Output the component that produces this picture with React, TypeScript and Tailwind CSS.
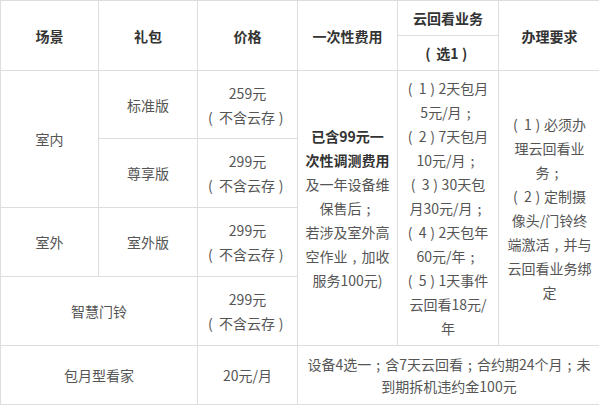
import type { ReactNode } from "react";

const cell = "border border-[#dddddd] text-center align-middle p-0 whitespace-nowrap";
const head = `${cell} font-bold text-[#333333]`;

// fullwidth punctuation drawn the way the reference font places it
const punct: Record<string, { ch: string; cls: string }> = {
  "（": { ch: "(", cls: "w-[11px] text-left" },
  "）": { ch: ")", cls: "w-[12px] text-center" },
  "；": { ch: ";", cls: "w-[1em] text-center" },
  "，": { ch: ",", cls: "w-[1em] text-center" },
};

function fmt(text: string): ReactNode[] {
  const out: ReactNode[] = [];
  let buf = "";
  [...text].forEach((c, i) => {
    const p = punct[c];
    if (p) {
      if (buf) out.push(buf);
      buf = "";
      out.push(
        <span key={i} className={`inline-block ${p.cls}`}>
          {p.ch}
        </span>,
      );
    } else {
      buf += c;
    }
  });
  if (buf) out.push(buf);
  return out;
}

const Lines = ({ lines, bold = 0 }: { lines: string[]; bold?: number }) => (
  <>
    {lines.map((l, i) => (
      <div key={i} className={i < bold ? "font-bold text-[#333333]" : ""}>
        {fmt(l)}
      </div>
    ))}
  </>
);

const Price = ({ value }: { value: string }) => (
  <Lines lines={[value, "（不含云存）"]} />
);

export default function App() {
  return (
    <div className="w-[599px] h-[406px] overflow-hidden bg-white">
      <table
        className="table-fixed border-collapse w-[600px] text-[14px] leading-[24px] text-[#555555]"
        style={{ fontFamily: '"Noto Sans CJK SC", "Microsoft YaHei", sans-serif' }}
      >
        <colgroup>
          <col className="w-[98px]" />
          <col className="w-[99px]" />
          <col className="w-[100px]" />
          <col className="w-[100px]" />
          <col className="w-[101px]" />
          <col className="w-[102px]" />
        </colgroup>
        <tbody>
          <tr className="h-[35px]">
            <td className={head} rowSpan={2}>场景</td>
            <td className={head} rowSpan={2}>礼包</td>
            <td className={head} rowSpan={2}>价格</td>
            <td className={head} rowSpan={2}>一次性费用</td>
            <td className={head}>云回看业务</td>
            <td className={head} rowSpan={2}>办理要求</td>
          </tr>
          <tr className="h-[35px]">
            <td className={head}>{fmt("（选1）")}</td>
          </tr>
          <tr className="h-[68px]">
            <td className={cell} rowSpan={2}>室内</td>
            <td className={cell}>标准版</td>
            <td className={cell}>
              <Price value="259元" />
            </td>
            <td className={cell} rowSpan={4}>
              <Lines
                bold={2}
                lines={[
                  "已含99元一",
                  "次性调测费用",
                  "及一年设备维",
                  "保售后；",
                  "若涉及室外高",
                  "空作业，加收",
                  "服务100元)",
                ]}
              />
            </td>
            <td className={cell} rowSpan={4}>
              <Lines
                lines={[
                  "（1）2天包月",
                  "5元/月；",
                  "（2）7天包月",
                  "10元/月；",
                  "（3）30天包",
                  "月30元/月；",
                  "（4）2天包年",
                  "60元/年；",
                  "（5）1天事件",
                  "云回看18元/",
                  "年",
                ]}
              />
            </td>
            <td className={cell} rowSpan={4}>
              <Lines
                lines={[
                  "（1）必须办",
                  "理云回看业",
                  "务；",
                  "（2）定制摄",
                  "像头/门铃终",
                  "端激活，并与",
                  "云回看业务绑",
                  "定",
                ]}
              />
            </td>
          </tr>
          <tr className="h-[69px]">
            <td className={cell}>尊享版</td>
            <td className={cell}>
              <Price value="299元" />
            </td>
          </tr>
          <tr className="h-[69px]">
            <td className={cell}>室外</td>
            <td className={cell}>室外版</td>
            <td className={cell}>
              <Price value="299元" />
            </td>
          </tr>
          <tr className="h-[69px]">
            <td className={cell} colSpan={2}>智慧门铃</td>
            <td className={cell}>
              <Price value="299元" />
            </td>
          </tr>
          <tr className="h-[59px]">
            <td className={cell} colSpan={2}>包月型看家</td>
            <td className={cell}>20元/月</td>
            <td className={`${cell} leading-[22px]`} colSpan={3}>
              <Lines lines={["设备4选一；含7天云回看；合约期24个月；未", "到期拆机违约金100元"]} />
            </td>
          </tr>
        </tbody>
      </table>
    </div>
  );
}
